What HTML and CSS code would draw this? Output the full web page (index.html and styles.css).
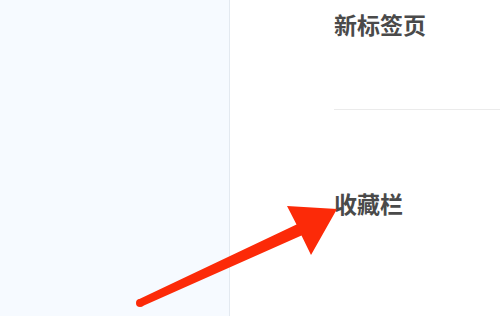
FILE: index.html
```html
<!DOCTYPE html>
<html lang="zh">
<head>
<meta charset="utf-8">
<link rel="stylesheet" href="styles.css">
</head>
<body>
<div class="page">
  <aside class="sidebar"></aside>
  <main class="main">
    <section class="group first">
      <h2 class="title">新标签页</h2>
    </section>
    <section class="group">
      <h2 class="title">收藏栏</h2>
    </section>
  </main>
  <svg class="arrow" width="500" height="316" viewBox="0 0 500 316">
    <polygon fill="#fc2a08" points="138.3,299.4 296.5,224.5 287,206 337,209 311,255 301.5,235.5 141.7,306.6"/>
    <circle cx="140" cy="303" r="4" fill="#fc2a08"/>
  </svg>
</div>
</body>
</html>
```
FILE: styles.css
```css
html, body {
  margin: 0;
  padding: 0;
  background: #ffffff;
}
.page {
  position: relative;
  display: flex;
  width: 500px;
  height: 316px;
  overflow: hidden;
  font-family: "Noto Sans CJK SC", "Noto Sans", sans-serif;
}
.sidebar {
  width: 229px;
  flex: none;
  background: #f6faff;
  border-right: 1px solid #e3e9f0;
}
.main {
  flex: 1;
  padding-left: 104px;
  display: flex;
  flex-direction: column;
}
.group.first {
  border-bottom: 1px solid #ebebeb;
  height: 110px;
  box-sizing: border-box;
}
.title {
  margin: 0;
  font-size: 23px;
  line-height: 32px;
  font-weight: 700;
  color: #4a4a4a;
  padding-top: 8px;
}
.group + .group .title {
  padding-top: 77px;
}
.arrow {
  position: absolute;
  left: 0;
  top: 0;
  pointer-events: none;
}
```
